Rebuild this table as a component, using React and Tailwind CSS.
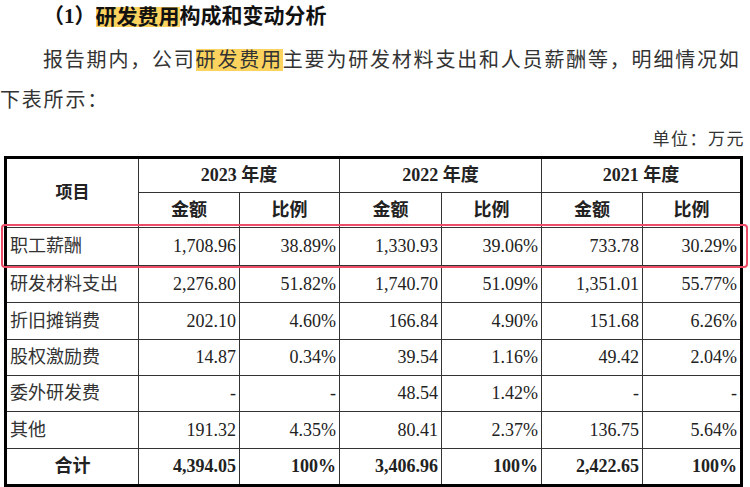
import React from "react";

const rows = [
  ["职工薪酬", "1,708.96", "38.89%", "1,330.93", "39.06%", "733.78", "30.29%"],
  ["研发材料支出", "2,276.80", "51.82%", "1,740.70", "51.09%", "1,351.01", "55.77%"],
  ["折旧摊销费", "202.10", "4.60%", "166.84", "4.90%", "151.68", "6.26%"],
  ["股权激励费", "14.87", "0.34%", "39.54", "1.16%", "49.42", "2.04%"],
  ["委外研发费", "-", "-", "48.54", "1.42%", "-", "-"],
  ["其他", "191.32", "4.35%", "80.41", "2.37%", "136.75", "5.64%"],
];

const total = ["合计", "4,394.05", "100%", "3,406.96", "100%", "2,422.65", "100%"];

const years = ["2023", "2022", "2021"];

const App = () => {
  return (
    <div
      className="w-[750px] h-[487px] bg-white overflow-hidden text-[#222]"
      style={{ fontFamily: '"Liberation Serif", "Noto Sans CJK SC", serif' }}
    >
      {/* Title */}
      <div className="h-[34px] mb-[6px] pl-[43px] flex items-center text-[21px] font-bold text-[#111] whitespace-nowrap">
        <span>（1）</span>
        <span className="inline-block leading-[20px] bg-[#fdd35f]">研发费用</span>
        <span>构成和变动分析</span>
      </div>

      {/* Paragraph */}
      <div className="text-[20px] tracking-[1.8px] text-[#333] whitespace-nowrap">
        <div className="h-[40px] pl-[43px] flex items-center">
          <span>报告期内，公司</span>
          <span className="inline-block leading-[22px] bg-[#fdd35f]">研发费用</span>
          <span>主要为研发材料支出和人员薪酬等，明细情况如</span>
        </div>
        <div className="h-[40px] flex items-center">下表所示：</div>
      </div>

      {/* Unit */}
      <div className="mt-[4px] h-[32px] pr-[5px] flex items-center justify-end text-[17px] tracking-[1.5px] text-[#333]">
        单位：万元
      </div>

      {/* Table */}
      <div className="relative ml-[4px] w-[739px]">
        <div className="border-[3px] border-black bg-[#333]">
          <div className="grid grid-cols-[131px_100px_99px_101px_99px_100px_97px] grid-rows-[33px_34px_37px_36px_36px_35px_35px_36px_35px] gap-px text-[18px]">
            <div className="row-span-2 bg-white flex items-center justify-center font-bold text-[17px]">
              项目
            </div>
            {years.map((y) => (
              <div key={y} className="col-span-2 bg-white flex items-center justify-center font-bold">
                {y} 年度
              </div>
            ))}
            {years.map((y) => (
              <React.Fragment key={y + "h"}>
                <div className="bg-white flex items-center justify-center font-bold">金额</div>
                <div className="bg-white flex items-center justify-center font-bold">比例</div>
              </React.Fragment>
            ))}

            {rows.map((r) => (
              <React.Fragment key={r[0]}>
                <div className="bg-white flex items-center pl-[3px] text-[#333]">{r[0]}</div>
                {r.slice(1).map((v, i) => (
                  <div key={i} className="bg-white flex items-center justify-end pr-[3px]">
                    {v}
                  </div>
                ))}
              </React.Fragment>
            ))}

            <div className="bg-white flex items-center justify-center font-bold">{total[0]}</div>
            {total.slice(1).map((v, i) => (
              <div key={i} className="bg-white flex items-center justify-end pr-[3px] font-bold">
                {v}
              </div>
            ))}
          </div>
        </div>

        {/* highlight box on first row */}
        <div className="absolute left-[-3px] top-[68px] w-[747px] h-[44px] border-2 border-[#ec4d69] rounded-[4px]" />
      </div>
    </div>
  );
};

export default App;
